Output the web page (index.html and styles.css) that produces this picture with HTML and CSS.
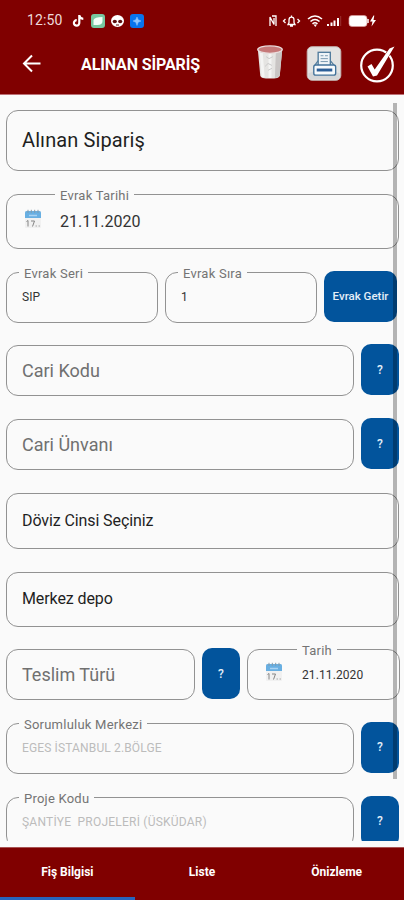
FILE: index.html
```html
<!DOCTYPE html>
<html lang="tr">
<head>
<meta charset="utf-8">
<title>Alınan Sipariş</title>
<link rel="stylesheet" href="styles.css">
</head>
<body>
<svg width="0" height="0" class="defs">
  <symbol id="cal" viewBox="0 0 18 20">
    <rect x="1" y="2" width="16" height="17" rx="1" fill="#f1f1f1"/>
    <path d="M1 9V3.500Q1 2 2.500 2h13Q17 2 17 3.500V9z" fill="#68afe2"/>
    <path d="M4 .8v3M7.300.8v3M10.700.8v3M14 .8v3" stroke="#8299aa" stroke-width="1"/>
    <path d="M5 6.500h8" stroke="#a9d3f3" stroke-width="1.500"/>
    <path d="M2.500 12.500l1.500-1v6M7 12h3.500l-2 5.500" fill="none" stroke="#858585" stroke-width="1"/>
    <path d="M11.500 17h1.500M14.500 17h1.500" stroke="#aaa"/>
  </symbol>
</svg>
<header class="header">
  <div class="status">
    <span class="clock">12:50</span>
    <svg class="apps" width="74" height="16" viewBox="0 0 74 16">
      <path d="M7.300 2v7.700a2.700 2.700 0 1 1-2.600-2.500M7.300 2.500c.4 2 1.900 3.200 4 3.300" fill="none" stroke="#fff" stroke-width="2.200"/>
      <rect x="19" y="1" width="14" height="14" rx="3" fill="#77c8a0"/>
      <path d="M21.500 12V7q1-3 9-3v4q0 4-5 4z" fill="#f2fff8"/>
      <ellipse cx="45.500" cy="8" rx="6.500" ry="6" fill="#fff"/>
      <ellipse cx="42.800" cy="8.500" rx="2.100" ry="1.700" fill="#5c1010"/><ellipse cx="48.200" cy="8.500" rx="2.100" ry="1.700" fill="#5c1010"/>
      <path d="M44 12h3" stroke="#5c1010"/>
      <rect x="58" y="1" width="14" height="14" rx="3" fill="#0874ee"/>
      <path d="M65 4l1.200 2.800 2.800 1.200-2.800 1.200-1.200 3.300-1.200-3.300-2.800-1.200 2.800-1.200z" fill="#8cc4ff" stroke="#8cc4ff" stroke-width=".5"/>
    </svg>
    <svg class="sys" width="114" height="16" viewBox="0 0 114 16">
      <g fill="none" stroke="#fff" stroke-width="1.300">
        <path d="M4 13V4l4 7.500V5M6 3h4v10"/>
        <path d="M19.500 6L17.500 8l2 2M31.500 6l2 2-2 2M22 11.500h7l-1-2V7q0-2.800-2.500-2.800T23 7v2.500zM24 13h3M25.500 2.500v2"/>
        <path d="M42 6q7-6 14 0M44.500 8.500q4.500-4 9 0M46.500 10.800q2.500-2 5 0" stroke-width="1.600"/>
      </g>
      <path d="M47.500 11.500h3.500L49.300 14zM61 11h2v2h-2zM64.500 9.500h2V13h-2zM67.500 7.500h2V13h-2zM71 5h2v8h-2z" fill="#fff"/>
      <path d="M74.700 3v10" stroke="#9b3030"/>
      <rect x="83" y="2.500" width="18" height="11" rx="3" fill="#fff" stroke="#d89c9c" stroke-width=".7"/>
      <path d="M102 6v4" stroke="#fff" stroke-width="1.500"/>
      <path d="M107.500 2.500L104 8.500h2.500l-1 5 4.500-6.500h-2.500l.8-4.500z" fill="#fff"/>
    </svg>
  </div>
  <div class="bar">
    <svg class="back" width="20" height="20" viewBox="0 0 20 20"><path d="M18.500 9.500H2M10 1.500l-8 8 8 8" fill="none" stroke="#fff" stroke-width="2"/></svg>
    <h1>ALINAN SİPARİŞ</h1>
    <svg class="trash" width="28" height="35" viewBox="0 0 28 36">
      <path d="M1.500 4.500L4 31.500q.3 3 10 3t10-3L26.500 4.500z" fill="#e5e4e2"/>
      <path d="M20 8l-1 26q4-.7 5-2.500L26.500 6z" fill="#c9c5c4"/>
      <path d="M5 8l2 25M14 9v25" stroke="#f4f4f3" stroke-width="3"/>
      <ellipse cx="14" cy="4.700" rx="12.600" ry="3.800" fill="#c67979" stroke="#e9dddd" stroke-width="1.300"/>
      <path d="M10 12l3 2 4-2M9 22l3-3 4 2M12 26l4-2" fill="none" stroke="#c8c8c8" stroke-width="1"/>
    </svg>
    <svg class="print" width="36" height="35" viewBox="0 0 36 36">
      <rect x=".7" y=".7" width="34.600" height="34.600" rx="5" fill="#e3e3e2" stroke="#c3b4b2"/>
      <path d="M2 28q16-7 32 0v3q0 3-4 3H6q-4 0-4-3z" fill="#d4d6d8"/>
      <rect x="12" y="6.500" width="12.500" height="15" fill="#eef3f7" stroke="#527c9d" stroke-width="1.400"/>
      <path d="M14.500 10h3M19 10h3M14.500 13h7.500M14.500 16h7.500" stroke="#7898b0"/>
      <path d="M12 15L8.500 20M24.500 15l4 5" stroke="#527c9d" stroke-width="1.200"/>
      <rect x="7.500" y="19.500" width="22.500" height="10.500" rx="2" fill="#f7fafc" stroke="#42729a" stroke-width="1.400"/>
      <path d="M10.500 24.700h16" stroke="#2b5e98" stroke-width="3"/>
    </svg>
    <svg class="check" width="37" height="38" viewBox="0 0 37 38">
      <circle cx="18" cy="20.500" r="15.800" fill="none" stroke="#fff" stroke-width="2.200"/>
      <path d="M8.500 21.500l4-2.500 3.200 5.500L30.500 3.500l5-2L18 30.500l-4 1z" fill="#fff" stroke="#800000" stroke-width="1" paint-order="stroke"/>
    </svg>
  </div>
</header>
<main class="form">
  <div class="row h61 mb23"><div class="field grow t20 dark">Alınan Sipariş</div></div>
  <div class="row h55 mb23"><div class="field grow t16"><span class="label l-date">Evrak Tarihi</span><svg class="cal"><use href="#cal"/></svg><span>21.11.2020</span></div></div>
  <div class="row h51 mb23">
    <div class="field w152 t12"><span class="label">Evrak Seri</span>SIP</div>
    <div class="field w152 t12"><span class="label">Evrak Sıra</span>1</div>
    <button class="btn fetch">Evrak Getir</button>
  </div>
  <div class="row h51 mb23"><div class="field grow t18 hint">Cari Kodu</div><button class="btn">?</button></div>
  <div class="row h51 mb23"><div class="field grow t18 hint">Cari Ünvanı</div><button class="btn">?</button></div>
  <div class="row h56 mb23"><div class="field grow t16 dark tight">Döviz Cinsi Seçiniz</div></div>
  <div class="row h55 mb22"><div class="field grow t16 dark tight">Merkez depo</div></div>
  <div class="row h51 mb23">
    <div class="field w189 t18 hint">Teslim Türü</div>
    <button class="btn">?</button>
    <div class="field grow t12 small-date"><span class="label l-small">Tarih</span><svg class="cal"><use href="#cal"/></svg><span>21.11.2020</span></div>
  </div>
  <div class="row h51 mb23"><div class="field grow t12 disabled"><span class="label">Sorumluluk Merkezi</span><span class="v1">EGES İSTANBUL 2.BÖLGE</span></div><button class="btn">?</button></div>
  <div class="row h51"><div class="field grow t12 disabled"><span class="label">Proje Kodu</span><span class="v2">ŞANTİYE&nbsp; PROJELERİ (ÜSKÜDAR)</span></div><button class="btn">?</button></div>
  <div class="scroll"></div>
</main>
<nav class="tabs"><span class="active">Fiş Bilgisi</span><span>Liste</span><span>Önizleme</span></nav>
</body>
</html>
```
FILE: styles.css
```css
* { box-sizing: border-box; }
body { margin: 0; width: 404px; height: 900px; overflow: hidden; background: #fafafa; font-family: Roboto, sans-serif; display: flex; flex-direction: column; }
.defs { position: absolute; }
.header { height: 95px; background: #800000; color: #fff; border-bottom: 1px solid #bd7076; flex: none; }
.status { height: 40px; padding: 13px 24px 0 27px; display: flex; align-items: flex-start; }
.clock { font-size: 14px; line-height: 15px; width: 45px; letter-spacing: .1px; color: #eedada; }
.sys { margin-left: auto; }
.bar { height: 48px; padding: 0 7px 0 22px; display: flex; align-items: center; }
.bar h1 { margin: 0 0 0 39px; font-size: 16px; font-weight: 700; line-height: 20px; white-space: nowrap; width: 175px; letter-spacing: -.12px; padding-top: 1px; }
.trash { margin: -3px 0 0 0; }
.print { margin: -1px 0 0 22px; }
.check { margin: -1px 0 0 17px; }
.back, .trash, .print, .check, .cal { flex: none; }
.form { position: relative; height: 746px; padding: 15px 5px 0 6px; overflow: hidden; flex: none; }
.row { display: flex; gap: 7px; }
.h61 { height: 61px; }
.h56 { height: 56px; }
.h55 { height: 55px; }
.h51 { height: 51px; }
.mb23 { margin-bottom: 22.800px; }
.mb22 { margin-bottom: 22.300px; }
.field { position: relative; border: 1px solid #929292; border-radius: 12px; padding: 0 15px; display: flex; align-items: center; color: #333; white-space: nowrap; }
.grow { flex: 1; }
.w152 { width: 152px; }
.w189 { width: 189px; }
.t20 { font-size: 20px; letter-spacing: .1px; padding-bottom: 1px; }
.t18 { font-size: 18px; }
.t16 { font-size: 16px; }
.t12 { font-size: 12px; }
.tight { letter-spacing: -.1px; padding-bottom: 1px; }
.dark { color: #1f1f1f; }
.hint { color: #707070; }
.disabled { color: #bcbcbc; }
.v1 { letter-spacing: .14px; }
.v2 { letter-spacing: .22px; }
.label { position: absolute; left: 12px; top: -7px; padding: 0 5px; line-height: 15px; font-size: 13px; color: #747474; background: #fafafa; letter-spacing: .23px; }
.l-date { left: 48px; }
.l-small { left: 49px; }
.cal { width: 18px; height: 20px; margin: -5px 18px 0 2px; }
.small-date { margin-right: -1px; letter-spacing: .1px; }
.small-date .cal { margin-right: 19px; }
.btn { width: 38px; height: 51px; margin: -1px 0 0; padding: 0; border: 0; border-radius: 10px; background: #02549c; color: #e4eef8; font: 500 12px Roboto, sans-serif; flex: none; }
.fetch { width: 73px; font-size: 11.500px; }
.scroll { position: absolute; left: 393px; top: 8px; width: 4px; height: 676px; background: rgba(0,0,0,.28); }
.tabs { margin-top: 6px; height: 53px; background: #800000; border-top: 1px solid #a85353; display: flex; flex: none; }
.tabs span { flex: 1; text-align: center; line-height: 49px; font-size: 12px; font-weight: 700; color: #fff; }
.tabs .active { border-bottom: 3px solid #2864bd; }
```
